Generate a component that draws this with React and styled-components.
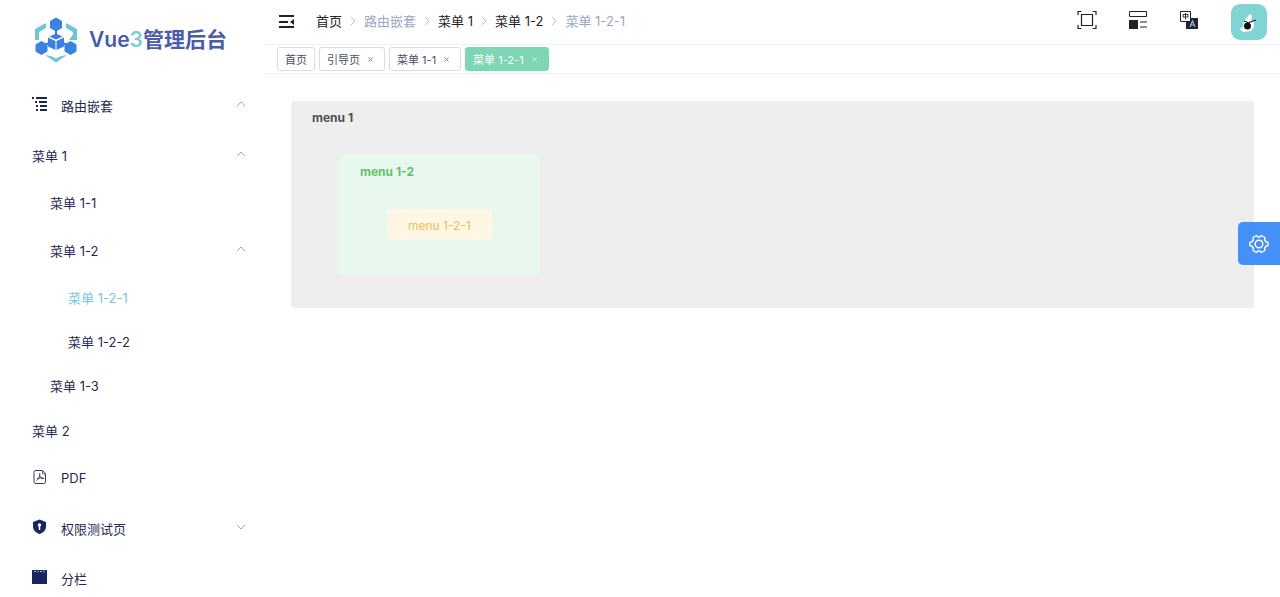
import React, { useState } from 'react';
import styled, { createGlobalStyle } from 'styled-components';

const GlobalStyle = createGlobalStyle`
  * {
    box-sizing: border-box;
  }
  body {
    margin: 0;
    background: #fff;
    color: #303133;
    font-family: Inter, "Noto Sans CJK SC", sans-serif;
    font-size: 13px;
  }
  a {
    color: inherit;
    text-decoration: none;
  }
  button {
    padding: 0;
    border: 0;
    background: none;
    color: inherit;
    font: inherit;
    cursor: pointer;
  }
  svg {
    display: block;
    flex: none;
  }
`

const menus = [
  { title: '路由嵌套', icon: 'nested', level: 0, arrow: 'up' },
  { title: '菜单 1', level: 1, arrow: 'up' },
  { title: '菜单 1-1', level: 2 },
  { title: '菜单 1-2', level: 2, arrow: 'up' },
  { title: '菜单 1-2-1', level: 3 },
  { title: '菜单 1-2-2', level: 3 },
  { title: '菜单 1-3', level: 2 },
  { title: '菜单 2', level: 1 },
  { title: 'PDF', icon: 'pdf', level: 0 },
  { title: '权限测试页', icon: 'shield', level: 0, arrow: 'down' },
  { title: '分栏', icon: 'split', level: 0 },
];

const crumbs = [
  { title: '首页', link: true },
  { title: '路由嵌套' },
  { title: '菜单 1', link: true },
  { title: '菜单 1-2', link: true },
  { title: '菜单 1-2-1' },
];

// top level and expandable rows are taller than plain items
const rowHeight = ({ level, arrow }) => {
  if (level === 0 || arrow) return 50;
  return level === 3 ? 44 : 45;
};

const hexagon = (x, y, r) => {
  const w = Math.round(r * 0.87);
  const h = r / 2;
  return `M${x} ${y - r}L${x + w} ${y - h}V${y + h}L${x} ${y + r}L${x - w} ${y + h}V${y - h}Z`;
};

const Logo = () => (
  <svg width="44" height="46" viewBox="0 0 44 46">
    <g fill="#6ec5d6">
      <path d="M1 12 12 6v5L5 15v8H1z" />
      <path d="M43 12 32 6v5l7 4v8h-4z" />
      <path d="M43 12v11h-4v-8z" />
      <path d="M11 38l6 1 5 2.500 5-2.500 6-1-11 7.500z" />
    </g>
    <g fill="#3b82e0">
      <path d={hexagon(22, 7.5, 7)} />
      <path d={hexagon(7.5, 31, 7)} />
      <path d={hexagon(36.5, 31, 7)} />
      <path d="M22 16.500 28.500 19.500 22 22.500 15.500 19.500z" />
      <path d="M14 20.500l7.500 3.500v9L14 29.500z" />
      <path d="M30 20.500l-7.500 3.500v9l7.500-3.500z" />
    </g>
    <path d="M11 28l4-2M33 28l-4-2M22 14v3" stroke="#3b82e0" strokeWidth="2" />
  </svg>
);

const MenuIcon = ({ name }) => {
  if (name === 'nested') {
    return (
      <svg width="16" height="16" viewBox="0 0 16 16" stroke="#18265c" strokeWidth="2">
        <path d="M0 2h2M4 2h11M3 6h2M7 6h8M4 10h2M8 10h7M4 14h2M8 14h7" />
      </svg>
    );
  }
  if (name === 'pdf') {
    return (
      <svg width="16" height="16" viewBox="0 0 16 16" fill="none" stroke="#333a4d">
        <path d="M4 1.500h6.500L13.500 5v7.500a2 2 0 0 1-2 2H4a2 2 0 0 1-2-2v-9a2 2 0 0 1 2-2z" />
        <path d="M10.500 1.500V5h3" strokeWidth=".7" />
        <path d="M7.500 4c1 2-.5 5-3 7.500M7.500 6c.5 2 2 3.500 4.500 3.500M5 10c2-1 4-1.500 7-.500" />
      </svg>
    );
  }
  if (name === 'shield') {
    return (
      <svg width="16" height="16" viewBox="0 0 16 16">
        <path d="M7.500.500 14 3v4.500c0 3.500-2.500 6-6.500 7.500C3.500 13.500 1 11 1 7.500V3z" fill="#18265c" />
        <circle cx="7.500" cy="6" r="1.700" fill="#fff" />
        <path d="M7.500 6v5" stroke="#fff" strokeWidth="1.500" />
      </svg>
    );
  }
  return (
    <svg width="16" height="16" viewBox="0 0 16 16">
      <path d="M0 1h15v14H0z" fill="#18265c" />
      <path d="M2 2.500h2M6 1.500v2M8 2.500h2M12 1.500v2" stroke="#b9bfd6" />
    </svg>
  );
};

const Arrow = ({ direction }) => (
  <svg width="10" height="6" viewBox="0 0 10 6" fill="none" stroke="#a4a7ad">
    <path d={direction === 'up' ? 'M1 5l4-4 4 4' : 'M1 1l4 4 4-4'} />
  </svg>
);

const FoldIcon = () => (
  <svg width="16" height="14" viewBox="0 0 16 14" fill="#222">
    <path d="M0 0h15v2H0zM0 6h9v2H0zM0 11h15v2H0zM15 4v6l-4-3z" />
  </svg>
);

const FullscreenIcon = () => (
  <svg width="20" height="20" viewBox="0 0 20 20" fill="none" stroke="#222">
    <path d="M1 5V1.500h3.500M15.500 1.500H19V5M19 15v3.500h-3.500M4.500 18.500H1V15" strokeWidth="1.200" />
    <path d="M4.500 4.500h11v11h-11z" strokeWidth="1.200" />
  </svg>
);

const LayoutIcon = () => (
  <svg width="20" height="20" viewBox="0 0 20 20" fill="none" stroke="#222">
    <path d="M1.500 1.500h17v5h-17z" />
    <path d="M1 10h9v9H1z" fill="#222" stroke="none" />
    <path d="M12 12h7M12 17h7" />
  </svg>
);

const LanguageIcon = () => (
  <svg width="20" height="20" viewBox="0 0 20 20" fill="none" stroke="#222">
    <path d="M7 8h12v11H7z" fill="#1d2733" stroke="none" />
    <path d="M1.500 1.500h10v10h-10z" fill="#fff" />
    <path d="M4 4.500h5v2.500H4zM6.500 3v6.500" strokeWidth=".9" />
    <path d="M11 17l2.500-6 2.500 6M12 15h3" stroke="#aab8c6" strokeWidth="1.200" />
  </svg>
);

const AvatarPicture = () => (
  <svg width="36" height="36" viewBox="0 0 36 36">
    <path d="M18 11l2-1 1 3-1 3 3 2v5l-3 4-8 1-3-3 3-2 1-6z" fill="#fff" />
    <circle cx="16.500" cy="22" r="3.500" fill="#111" />
    <path d="M13 17l5 2M18 18.500l7-2.500" stroke="#222" strokeWidth="1.300" />
  </svg>
);

const GearIcon = () => (
  <svg width="20" height="20" viewBox="0 0 20 20" fill="none" stroke="#fff" strokeWidth="1.400">
    <path
      d="M7.500 1.500 9 3h2l1.500-1.500 3.500 2-.5 2.200 1.200 1.800 2.300.8v3.400l-2.300.8-1.200 1.800.5 2.200-3.500 2L11 17H9l-1.500 1.500-3.500-2 .5-2.200-1.200-1.800L1 11.700V8.300l2.300-.8 1.200-1.800L4 3.500z"
      strokeLinejoin="round"
    />
    <circle cx="10" cy="10" r="3.800" />
  </svg>
);

const Close = () => (
  <CloseButton aria-label="close">
    <svg width="5" height="5" viewBox="0 0 5 5" stroke="currentColor">
      <path d="M.5.5l4 4M4.500.5l-4 4" />
    </svg>
  </CloseButton>
);

const Separator = () => (
  <svg width="6" height="10" viewBox="0 0 6 10" fill="none" stroke="#bcc0c8">
    <path d="M1 1l4 4-4 4" />
  </svg>
);

function App() {
  const [active, setActive] = useState('菜单 1-2-1');

  return (
    <Page>
      <GlobalStyle />
      <Sidebar>
        <Brand href="#">
          <Logo />
          <BrandName>Vue<em>3</em>管理后台</BrandName>
        </Brand>
        <nav>
          {menus.map(menu => (
            <MenuRow
              key={menu.title}
              $level={menu.level}
              $height={rowHeight(menu)}
              $active={menu.title === active}
              onClick={() => !menu.arrow && setActive(menu.title)}
            >
              {menu.icon && <MenuIcon name={menu.icon} />}
              <span>{menu.title}</span>
              {menu.arrow && <Arrow direction={menu.arrow} />}
            </MenuRow>
          ))}
        </nav>
      </Sidebar>
      <Main>
        <Header>
          <button aria-label="fold menu"><FoldIcon /></button>
          <Breadcrumb>
            {crumbs.map((crumb, i) => (
              <React.Fragment key={crumb.title}>
                {i > 0 && <Separator />}
                {crumb.link ? <a href="#">{crumb.title}</a> : <span>{crumb.title}</span>}
              </React.Fragment>
            ))}
          </Breadcrumb>
          <Tools>
            <ToolButton aria-label="fullscreen"><FullscreenIcon /></ToolButton>
            <ToolButton aria-label="layout size"><LayoutIcon /></ToolButton>
            <ToolButton aria-label="language"><LanguageIcon /></ToolButton>
          </Tools>
          <Avatar aria-label="user"><AvatarPicture /></Avatar>
        </Header>
        <TagBar>
          <Tag><a href="#">首页</a></Tag>
          <Tag><a href="#">引导页</a><Close /></Tag>
          <Tag><a href="#">菜单 1-1</a><Close /></Tag>
          <Tag $active><a href="#">菜单 1-2-1</a><Close /></Tag>
        </TagBar>
        <Content>
          <Alert $color="#4d4f53" $background="#eeeeee">
            <AlertTitle $bold>menu 1</AlertTitle>
            <AlertBody>
              <Alert $color="#5fc26a" $background="#e9f8ef">
                <AlertTitle $bold>menu 1-2</AlertTitle>
                <AlertBody>
                  <Alert $color="#e8c252" $background="#fff7e6">
                    <AlertTitle>menu 1-2-1</AlertTitle>
                  </Alert>
                </AlertBody>
              </Alert>
            </AlertBody>
          </Alert>
        </Content>
      </Main>
      <SettingButton aria-label="settings"><GearIcon /></SettingButton>
    </Page>
  );
}

export default App;

const Page = styled.div`
  display: flex;
  height: 100vh;
  overflow: hidden;
`
const Sidebar = styled.aside`
  flex: none;
  width: 264px;
  overflow: hidden;
`
const Brand = styled.a`
  display: flex;
  align-items: center;
  gap: 11px;
  height: 80px;
  padding-left: 34px;
`
const BrandName = styled.span`
  padding-bottom: 5px;
  color: #4a5bab;
  font-size: 21px;
  font-weight: 600;

  em {
    color: #78cdd8;
    font-style: normal;
  }
`
const MenuRow = styled.button`
  display: flex;
  align-items: center;
  width: 100%;
  height: ${({ $height }) => $height}px;
  padding: 0 18px 0 ${({ $level }) => 32 + Math.max($level - 1, 0) * 18}px;
  color: ${({ $active }) => ($active ? '#78c8d8' : '#1f2a52')};
  text-align: left;

  span {
    flex: 1;
  }
  svg {
    margin-bottom: 3px;
  }
  svg + span {
    margin-left: 13px;
  }
`
const Main = styled.main`
  flex: 1;
  min-width: 0;
`
const Header = styled.header`
  display: flex;
  align-items: center;
  height: 45px;
  padding: 0 13px 0 15px;
  border-bottom: 1px solid #f0f0f0;
`
const Breadcrumb = styled.nav`
  display: flex;
  flex: 1;
  align-items: center;
  gap: 8px;
  margin-left: 21px;
  padding-bottom: 3px;
  color: #97a8be;

  a {
    color: #222;
  }
`
const Tools = styled.div`
  display: flex;
  gap: 31px;
  padding-bottom: 4px;
`
const ToolButton = styled.button`
  height: 20px;
`
const Avatar = styled.button`
  margin-left: 32px;
  border-radius: 9px;
  background: #80d4d4;
`
const TagBar = styled.div`
  display: flex;
  align-items: center;
  gap: 4px;
  height: 29px;
  padding-left: 13px;
  border-bottom: 1px solid #f0f0f0;
`
const Tag = styled.div`
  display: flex;
  align-items: center;
  gap: 8px;
  height: 24px;
  padding: 0 7px;
  border: 1px solid ${({ $active }) => ($active ? '#7dd6b4' : '#d8dce5')};
  border-radius: 3px;
  background: ${({ $active }) => ($active ? '#7dd6b4' : '#fff')};
  color: ${({ $active }) => ($active ? '#fff' : '#495060')};
  font-size: 11px;
`
const CloseButton = styled.button`
  padding-right: 4px;
  opacity: .7;
`
const Content = styled.div`
  padding: 27px 26px 27px 27px;
`
const Alert = styled.div`
  padding: 9px 21px 7px;
  border-radius: 3px;
  background: ${({ $background }) => $background};
  color: ${({ $color }) => $color};
`
const AlertTitle = styled.div`
  font-size: 12px;
  font-weight: ${({ $bold }) => ($bold ? 700 : 400)};
  line-height: 15px;
`
const AlertBody = styled.div`
  display: flex;
  padding: 30px 27px 27px;
`
const SettingButton = styled.button`
  position: fixed;
  top: 222px;
  right: 0;
  display: flex;
  align-items: center;
  justify-content: center;
  width: 42px;
  height: 43px;
  border-radius: 5px 0 0 5px;
  background: #4490f7;
`
